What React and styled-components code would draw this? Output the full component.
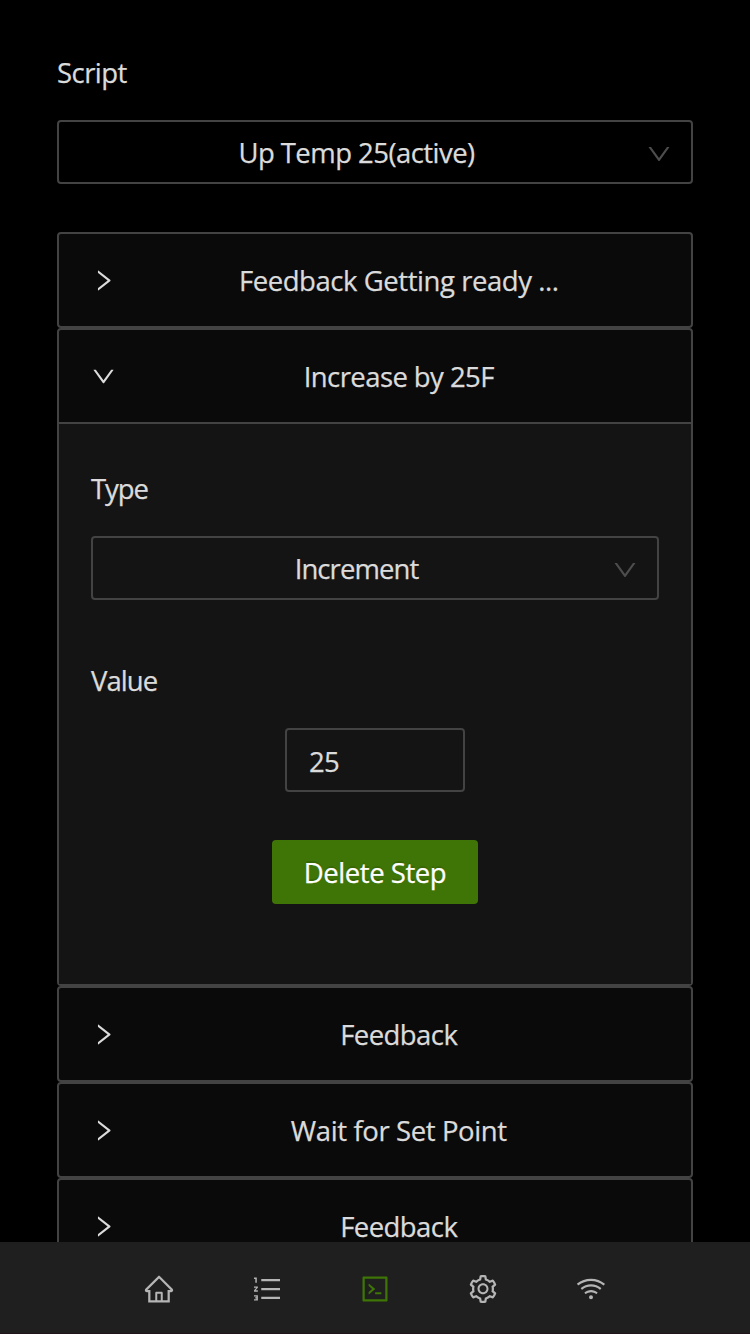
import React from "react";
import styled, { createGlobalStyle } from "styled-components";
import {
  AiOutlineHome,
  AiOutlineOrderedList,
  AiOutlineCode,
  AiOutlineSetting,
  AiOutlineWifi,
  AiOutlineRight,
  AiOutlineDown,
} from "react-icons/ai";

const GlobalStyle = createGlobalStyle`
  *, *::before, *::after { box-sizing: border-box; }
  html, body { margin: 0; background: #000; overflow: hidden; }
  body {
    font-family: "Segoe UI", "Open Sans", "Noto Sans", sans-serif;
    font-size: 27.5px;
    line-height: 44px;
    color: #dbdbdb;
  }
  button, input { font: inherit; color: inherit; }
`;

const Screen = styled.div`
  height: 1334px;
  display: flex;
  flex-direction: column;
  background: #000;
`;

const Content = styled.main`
  flex: 1;
  min-height: 0;
  overflow: hidden;
  padding: 48px 57px 0;
`;

const Text = styled.span`
  letter-spacing: ${(p) => p.$track || -0.5}px;
  white-space: nowrap;
  -webkit-text-stroke: 0.25px currentColor;
`;

const Label = styled.div`
  height: 48px;
  line-height: 50px;
  margin-bottom: 24px;
`;

const SelectBox = styled.div`
  display: flex;
  align-items: center;
  height: 64px;
  padding: 2px 18px 0 20px;
  border: 2px solid #434343;
  border-radius: 4px;
  margin-bottom: ${(p) => p.$gap}px;
`;

const SelectValue = styled.div`
  flex: 1;
  text-align: center;
  padding-right: 11px;
`;

const SelectArrow = styled(AiOutlineDown)`
  flex: none;
  margin-top: 1px;
  color: #4d4d4d;
  font-size: 28px;
`;

const Panel = styled.section`
  border: 2px solid #434343;
  border-radius: 4px;
  background: #0a0a0a;
`;

const PanelHeader = styled.header`
  display: flex;
  align-items: center;
  height: 92px;
  padding: 2px 31px 0 30.5px;
`;

const ArrowSlot = styled.span`
  display: flex;
  flex: none;
  width: 28px;
  margin-bottom: 2px;
  font-size: 27px;
`;

const PanelTitle = styled.div`
  flex: 1;
  text-align: center;
  padding-left: 20px;
`;

const PanelBody = styled.div`
  height: 562px;
  padding: 40px 32px 0;
  border-top: 2px solid #434343;
  background: #141414;
`;

const Actions = styled.div`
  display: flex;
  flex-direction: column;
  align-items: center;
  gap: 48px;
`;

const NumberInput = styled.div`
  display: flex;
  align-items: center;
  width: 180px;
  height: 64px;
  padding: 4px 22px 0;
  border: 2px solid #434343;
  border-radius: 4px;
`;

const PrimaryButton = styled.button`
  width: 206px;
  height: 64px;
  padding: 2px 0 0;
  border: 0;
  border-radius: 4px;
  background: #3f7506;
  color: #fff;
  text-shadow: 0 -2px 0 rgba(0, 0, 0, 0.12);
`;

const TabBar = styled.nav`
  display: flex;
  flex: none;
  justify-content: center;
  align-items: center;
  height: 92px;
  padding-top: 2px;
  background: #1f1f1f;
  border-bottom: 1px solid #1f141a;
`;

const Tab = styled.a`
  display: flex;
  justify-content: center;
  width: 108px;
  font-size: 32px;
  color: ${(p) => (p.$active ? "#3f7506" : "#b5b5b5")};
`;

function Select({ value, track, gap = 48 }) {
  return (
    <SelectBox $gap={gap}>
      <SelectValue>
        <Text $track={track}>{value}</Text>
      </SelectValue>
      <SelectArrow />
    </SelectBox>
  );
}

function Step({ title, track, open, children }) {
  return (
    <Panel>
      <PanelHeader>
        <ArrowSlot>{open ? <AiOutlineDown /> : <AiOutlineRight />}</ArrowSlot>
        <PanelTitle>
          <Text $track={track}>{title}</Text>
        </PanelTitle>
      </PanelHeader>
      {open && <PanelBody>{children}</PanelBody>}
    </Panel>
  );
}

const tabs = [
  AiOutlineHome,
  AiOutlineOrderedList,
  AiOutlineCode,
  AiOutlineSetting,
  AiOutlineWifi,
];

export default function App() {
  return (
    <>
      <GlobalStyle />
      <Screen>
        <Content>
          <Label><Text $track={-0.55}>Script</Text></Label>
          <Select value="Up Temp 25(active)" track={-0.55} />
          <Step title="Feedback Getting ready ..." track={-0.44} />
          <Step title="Increase by 25F" track={-0.58} open>
            <Label><Text $track={-1.1}>Type</Text></Label>
            <Select value="Increment" track={-0.92} gap={56} />
            <Label><Text $track={-0.95}>Value</Text></Label>
            <Actions>
              <NumberInput><Text $track={-0.8}>25</Text></NumberInput>
              <PrimaryButton><Text $track={-0.45}>Delete Step</Text></PrimaryButton>
            </Actions>
          </Step>
          <Step title="Feedback" track={-0.55} />
          <Step title="Wait for Set Point" track={-0.39} />
          <Step title="Feedback" track={-0.55} />
        </Content>
        <TabBar>
          {tabs.map((Icon, i) => (
            <Tab key={i} $active={i === 2}><Icon /></Tab>
          ))}
        </TabBar>
      </Screen>
    </>
  );
}
